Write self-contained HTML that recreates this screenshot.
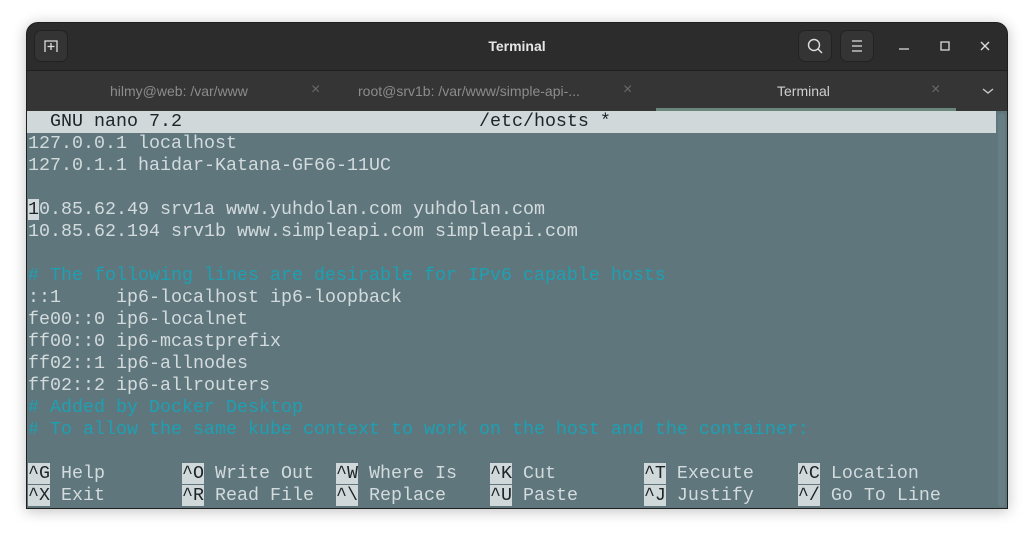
<!DOCTYPE html>
<html><head><meta charset="utf-8"><style>
html,body{margin:0;padding:0;width:1034px;height:538px;background:#fff;overflow:hidden}
.win{position:absolute;left:26px;top:22px;width:982px;height:487px;border-radius:12px 12px 0 0;overflow:hidden;background:#2c2c2c;box-shadow:0 2px 14px rgba(0,0,0,.25);border:1px solid #1e1e1e;box-sizing:border-box}
.title{position:absolute;left:0;top:0;width:100%;height:47px;background:#2c2c2c;border-bottom:1px solid #1f1f1f}
.title .t{position:absolute;left:0;right:0;top:15px;text-align:center;color:#e6e6e6;font:bold 14px "Liberation Sans",sans-serif}
.btn{position:absolute;top:7px;width:34px;height:32px;border-radius:7px;background:#343434;border:1px solid #222;box-sizing:border-box}
.tabs{position:absolute;left:0;top:48px;width:100%;height:40px;background:#353535}
.tab{position:absolute;top:12px;color:#8c8c8c;font:14px "Liberation Sans",sans-serif}
.x{position:absolute;top:10px;color:#6a6a6a;font:16px "Liberation Sans",sans-serif}
.term{position:absolute;left:0;top:88px;width:100%;height:399px;background:#5e767c}
.row{position:absolute;left:1px;height:22px;line-height:24px;font:18.33px "Liberation Mono",monospace;white-space:pre;color:#d3dbdd}
.c{color:#1ea0b3}
.k{background:#d0d8da;color:#1c2428}
</style></head><body>
<div class="win">
 <div class="title">
  <div class="btn" style="left:7px"><svg width="34" height="32" style="position:absolute;left:-1px;top:-1px"><path d="M11 22V11h12v11M17 13v7M13.5 16.5h7" stroke="#ddd" stroke-width="1.3" fill="none"/></svg></div>
  <div class="t">Terminal</div>
  <div class="btn" style="left:771px"><svg width="34" height="32" style="position:absolute;left:-1px;top:-1px"><circle cx="16" cy="15" r="5.5" stroke="#ddd" stroke-width="1.4" fill="none"/><path d="M20 19l4 4" stroke="#ddd" stroke-width="1.4"/></svg></div>
  <div class="btn" style="left:813px"><svg width="34" height="32" style="position:absolute;left:-1px;top:-1px"><path d="M12 11h10M12 16h10M12 21h10" stroke="#ddd" stroke-width="1.2"/></svg></div>
  <svg width="120" height="47" style="position:absolute;left:862px;top:0"><path d="M10 26h10" stroke="#ddd" stroke-width="1.3"/><path d="M52 19h8v8h-8z" stroke="#ddd" stroke-width="1.3" fill="none"/><path d="M92 19l8 8M100 19l-8 8" stroke="#ddd" stroke-width="1.4"/></svg>
 </div>
 <div class="tabs">
  <div class="tab" style="left:83px">hilmy@web: /var/www</div><div class="x" style="left:284px">×</div>
  <div class="tab" style="left:331px">root@srv1b: /var/www/simple-api-...</div><div class="x" style="left:596px">×</div>
  <div class="tab" style="left:750px;color:#cfcfcf">Terminal</div><div class="x" style="left:904px">×</div>
  <svg width="20" height="20" style="position:absolute;left:951px;top:10px"><path d="M5 8l5 4 5-4" stroke="#ccc" stroke-width="1.3" fill="none"/></svg>
  <div style="position:absolute;left:629px;top:37px;width:300px;height:3px;background:#6a857a"></div>
 </div>
 <div class="term">
  <div style="position:absolute;left:0;top:0;width:969px;height:22px;background:#d0d8da"></div>
  <div style="position:absolute;left:971px;top:2px;width:7px;height:394px;border-radius:4px;background:#677e84"></div>
  <div class="row" style="top:0;color:#1c2428">  GNU nano 7.2                           /etc/hosts *</div>
  <div class="row" style="top:22px">127.0.0.1 localhost</div>
  <div class="row" style="top:44px">127.0.1.1 haidar-Katana-GF66-11UC</div>
  <div class="row" style="top:88px"><span class="k">1</span>0.85.62.49 srv1a www.yuhdolan.com yuhdolan.com</div>
  <div class="row" style="top:110px">10.85.62.194 srv1b www.simpleapi.com simpleapi.com</div>
  <div class="row c" style="top:154px"># The following lines are desirable for IPv6 capable hosts</div>
  <div class="row" style="top:176px">::1     ip6-localhost ip6-loopback</div>
  <div class="row" style="top:198px">fe00::0 ip6-localnet</div>
  <div class="row" style="top:220px">ff00::0 ip6-mcastprefix</div>
  <div class="row" style="top:242px">ff02::1 ip6-allnodes</div>
  <div class="row" style="top:264px">ff02::2 ip6-allrouters</div>
  <div class="row c" style="top:286px"># Added by Docker Desktop</div>
  <div class="row c" style="top:308px"># To allow the same kube context to work on the host and the container:</div>
  <div class="row" style="top:352px"><span class="k">^G</span> Help       <span class="k">^O</span> Write Out  <span class="k">^W</span> Where Is   <span class="k">^K</span> Cut        <span class="k">^T</span> Execute    <span class="k">^C</span> Location</div>
  <div class="row" style="top:374px"><span class="k">^X</span> Exit       <span class="k">^R</span> Read File  <span class="k">^\</span> Replace    <span class="k">^U</span> Paste      <span class="k">^J</span> Justify    <span class="k">^/</span> Go To Line</div>
 </div>
</div>
</body></html>
